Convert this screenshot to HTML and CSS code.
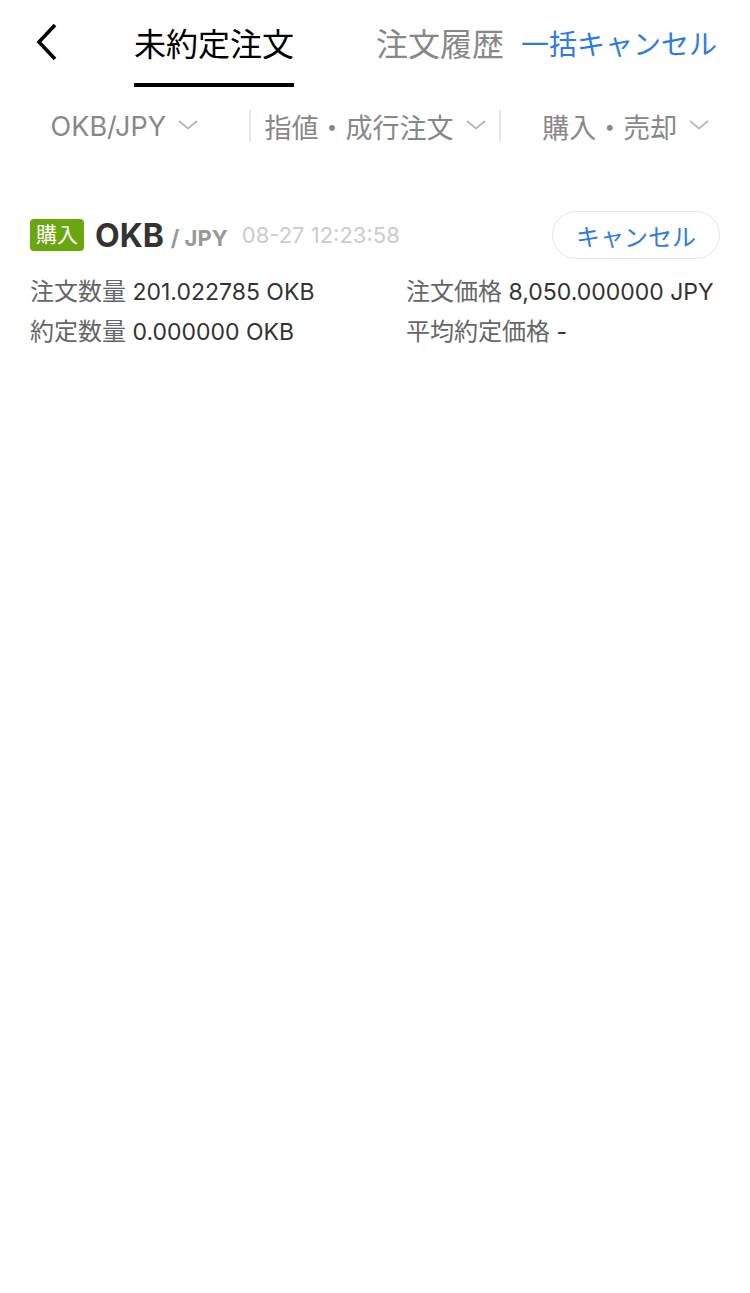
FILE: index.html
```html
<!DOCTYPE html>
<html lang="ja">
<head>
  <meta charset="UTF-8" />
  <title>未約定注文</title>
  <link rel="stylesheet" href="styles.css">
</head>
<body>

  <div class="top_bar">
    <div class="back">
      <svg width="22" height="38" viewBox="0 0 22 38"><path d="M19 2 L3 19 L19 36" fill="none" stroke="#000" stroke-width="3.6"/></svg>
    </div>
    <div class="tab active">未約定注文</div>
    <div class="tab">注文履歴</div>
    <div class="cancel-all">一括キャンセル</div>
  </div>

  <div class="filters">
    <div class="filter">OKB/JPY <svg class="chev" width="20" height="10" viewBox="0 0 20 10"><path d="M1 1 L10 8.5 L19 1" fill="none" stroke="#bbb" stroke-width="2"/></svg></div>
    <div class="filter">指値・成行注文 <svg class="chev" width="20" height="10" viewBox="0 0 20 10"><path d="M1 1 L10 8.5 L19 1" fill="none" stroke="#bbb" stroke-width="2"/></svg></div>
    <div class="filter">購入・売却 <svg class="chev" width="20" height="10" viewBox="0 0 20 10"><path d="M1 1 L10 8.5 L19 1" fill="none" stroke="#bbb" stroke-width="2"/></svg></div>
  </div>

  <div class="order">
    <div class="order-head">
      <span class="tag">購入</span>
      <span class="coin">OKB</span>
      <span class="quote">/ JPY</span>
      <span class="time">08-27 12:23:58</span>
      <button class="cancel">キャンセル</button>
    </div>
    <div class="details">
      <div class="info"><span class="label">注文数量</span> 201.022785 OKB</div>
      <div class="info"><span class="label">注文価格</span> 8,050.000000 JPY</div>
      <div class="info"><span class="label">約定数量</span> 0.000000 OKB</div>
      <div class="info"><span class="label">平均約定価格</span> -</div>
    </div>
  </div>

</body>
</html>
```

FILE: styles.css
```css
body {
  margin: 0;
  padding: 0;
  background-color: #fff;
  font-family: Inter, "Noto Sans CJK JP", sans-serif;
  color: #333;
}

.top_bar {
  display: flex;
  align-items: center;
  height: 90px;
  padding: 0 33px 0 36px;
  box-sizing: border-box;
}

.back {
  display: flex;
  width: 22px;
  margin-top: -6px;
}

.tab {
  position: relative;
  font-size: 32px;
  color: #888;
  line-height: 90px;
}

.tab.active {
  color: #000;
  margin-left: 76px;
  margin-right: 82px;
}

.tab.active::after {
  content: "";
  position: absolute;
  left: 0;
  right: 0;
  bottom: 3px;
  height: 4px;
  background: #000;
}

.cancel-all {
  margin-left: auto;
  font-size: 28px;
  color: #2e7be6;
  margin-top: -4px;
}

.filters {
  display: flex;
  align-items: center;
  height: 72px;
}

.filter {
  flex: 1;
  display: flex;
  align-items: center;
  justify-content: center;
  gap: 12px;
  font-size: 27px;
  color: #888;
  height: 32px;
}

.filter + .filter {
  border-left: 2px solid #e8e8e8;
}

.chev {
  margin-top: -2px;
}

.order {
  padding: 49px 30px 0 30px;
}

.order-head {
  display: flex;
  align-items: center;
  height: 48px;
}

.tag {
  background: #6aa60f;
  color: #fff;
  font-size: 21px;
  border-radius: 4px;
  padding: 0 6px;
  height: 32px;
  line-height: 32px;
}

.coin {
  font-size: 32px;
  font-weight: bold;
  margin-left: 11px;
}

.quote {
  font-size: 22px;
  font-weight: bold;
  color: #999;
  margin: 6px 0 0 7px;
}

.time {
  font-size: 22px;
  color: #ccc;
  margin-left: 14px;
}

.cancel {
  margin-left: auto;
  width: 168px;
  height: 48px;
  border: 1px solid #e5e5e5;
  border-radius: 24px;
  background: #fff;
  color: #2e7be6;
  font-family: inherit;
  font-size: 24px;
}

.details {
  display: grid;
  grid-template-columns: 376px 1fr;
  margin-top: 13px;
}

.info {
  font-size: 23px;
  line-height: 40px;
  color: #333;
  white-space: nowrap;
}

.label {
  color: #666;
  font-size: 24px;
}
```
